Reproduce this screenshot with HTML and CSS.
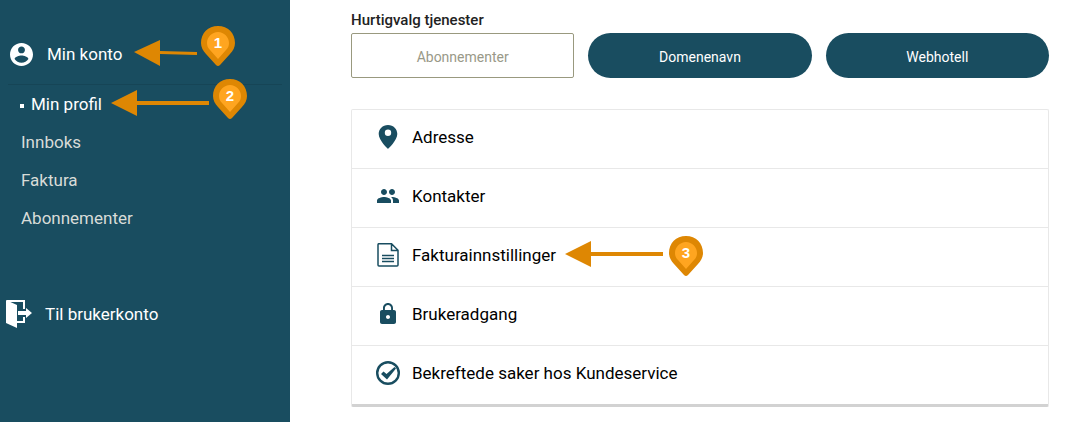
FILE: index.html
```html
<!DOCTYPE html>
<html lang="no">

<head>
    <meta charset="UTF-8">
    <meta name="viewport" content="width=device-width, initial-scale=1.0">
    <title>Min profil</title>
    <link rel="stylesheet" href="styles.css">
</head>

<body>
    <nav class="sidebar">
        <a href="#" class="side-head">
            <svg class="icon-user" viewBox="2 2 20 20"><path d="M12 2C6.48 2 2 6.48 2 12s4.48 10 10 10 10-4.48 10-10S17.52 2 12 2zm0 3c1.66 0 3 1.34 3 3s-1.34 3-3 3-3-1.34-3-3 1.34-3 3-3zm0 14.2c-2.5 0-4.71-1.28-6-3.22.03-1.99 4-3.08 6-3.08 1.99 0 5.97 1.09 6 3.08-1.29 1.94-3.5 3.22-6 3.22z"/></svg>
            <span>Min konto</span>
            <span class="pointer pointer-one">
                <svg class="arrow" width="63" height="26" viewBox="0 0 63 26"><path d="M0 12L26 0v26z"/><path d="M26 11l37 1v3l-37-1z"/></svg>
                <svg class="pin" viewBox="0 0 34 40"><path class="pin-out" d="M17 0C7 0 0 7 0 17c0 4 2 8 5 11l10 11q2 2 4 0l10-11c3-3 5-7 5-11C34 7 27 0 17 0z"/><path class="pin-in" d="M17 6C11 6 6 11 6 17c0 3 1 5 3 7l8 9 8-9c2-2 3-4 3-7 0-6-5-11-11-11z"/><text x="17" y="22">1</text></svg>
            </span>
        </a>

        <ul class="side-menu">
            <li>
                <a href="#" class="active">Min profil
                    <span class="pointer">
                        <svg class="arrow" width="98" height="26" viewBox="0 0 98 26"><path d="M0 13L26 0v26zM26 11h72v4H26z"/></svg>
                        <svg class="pin" viewBox="0 0 34 40"><path class="pin-out" d="M17 0C7 0 0 7 0 17c0 4 2 8 5 11l10 11q2 2 4 0l10-11c3-3 5-7 5-11C34 7 27 0 17 0z"/><path class="pin-in" d="M17 6C11 6 6 11 6 17c0 3 1 5 3 7l8 9 8-9c2-2 3-4 3-7 0-6-5-11-11-11z"/><text x="17" y="22">2</text></svg>
                    </span>
                </a>
            </li>
            <li><a href="#">Innboks</a></li>
            <li><a href="#">Faktura</a></li>
            <li><a href="#">Abonnementer</a></li>
        </ul>

        <a href="#" class="side-exit">
            <svg class="icon-exit" viewBox="0 0 26 28"><path d="M0 0l11 5v23L0 23z"/><path class="frame" d="M1 1h17v8M11 22h7v-5"/><path d="M12 11h8V8l6 5-6 5v-3h-8z"/></svg>
            <span>Til brukerkonto</span>
        </a>
    </nav>

    <main class="content">
        <h2>Hurtigvalg tjenester</h2>
        <div class="tabs">
            <button type="button" class="current">Abonnementer</button>
            <button type="button">Domenenavn</button>
            <button type="button">Webhotell</button>
        </div>

        <ul class="panel">
            <li>
                <a href="#">
                    <svg class="icon" viewBox="0 0 24 24"><path d="M12 0C6.500 0 2.700 4 2.700 9c0 6.500 9.300 15 9.300 15s9.300-8.500 9.300-15c0-5-3.800-9-9.300-9zm0 11a3.200 3.200 0 1 1 0-6.400 3.200 3.200 0 0 1 0 6.400z"/></svg>
                    <span>Adresse</span>
                </a>
            </li>
            <li>
                <a href="#">
                    <svg class="icon" viewBox="0 0 24 24"><path d="M16 11c1.660 0 2.990-1.340 2.990-3S17.660 5 16 5c-1.660 0-3 1.340-3 3s1.340 3 3 3zm-8 0c1.660 0 2.990-1.340 2.990-3S9.660 5 8 5C6.340 5 5 6.340 5 8s1.340 3 3 3zm0 2c-2.330 0-7 1.170-7 3.500V19h14v-2.500c0-2.330-4.670-3.500-7-3.500zm8 0c-.290 0-.620.020-.970.050 1.160.840 1.970 1.970 1.970 3.450V19h6v-2.500c0-2.330-4.670-3.500-7-3.500z"/></svg>
                    <span>Kontakter</span>
                </a>
            </li>
            <li>
                <a href="#">
                    <svg class="icon line" viewBox="0 0 24 24"><path d="M3 .7h12.500l6.500 6.500V22q0 1-1 1H3q-1 0-1-1V1.700q0-1 1-1zM15.500 1v6.500H22M6 12.500h12M6 15.500h12M6 18.500h12"/></svg>
                    <span>Fakturainnstillinger</span>
                    <span class="pointer">
                        <svg class="arrow" width="98" height="26" viewBox="0 0 98 26"><path d="M0 13L26 0v26zM26 11h72v4H26z"/></svg>
                        <svg class="pin" viewBox="0 0 34 40"><path class="pin-out" d="M17 0C7 0 0 7 0 17c0 4 2 8 5 11l10 11q2 2 4 0l10-11c3-3 5-7 5-11C34 7 27 0 17 0z"/><path class="pin-in" d="M17 6C11 6 6 11 6 17c0 3 1 5 3 7l8 9 8-9c2-2 3-4 3-7 0-6-5-11-11-11z"/><text x="17" y="22">3</text></svg>
                    </span>
                </a>
            </li>
            <li>
                <a href="#">
                    <svg class="icon" viewBox="0 0 24 24"><path d="M18 8h-1V6c0-2.760-2.240-5-5-5S7 3.240 7 6v2H6c-1.100 0-2 .9-2 2v10c0 1.100.9 2 2 2h12c1.100 0 2-.9 2-2V10c0-1.100-.9-2-2-2zm-6 9c-1.100 0-2-.9-2-2s.9-2 2-2 2 .9 2 2-.9 2-2 2zm3.100-9H8.900V6c0-1.710 1.390-3.100 3.100-3.100 1.710 0 3.100 1.390 3.100 3.100v2z"/></svg>
                    <span>Brukeradgang</span>
                </a>
            </li>
            <li>
                <a href="#">
                    <svg class="icon" viewBox="0 0 24 24"><circle class="ring" cx="12" cy="12" r="10.800"/><path d="M5 13l2.500-2.500 3 2.500L18.500 6l1.500 1.500L11 18.500z"/></svg>
                    <span>Bekreftede saker hos Kundeservice</span>
                </a>
            </li>
        </ul>
    </main>
</body>

</html>
```
FILE: styles.css
```css
* {
    margin: 0;
    padding: 0;
    box-sizing: border-box;
}

body {
    display: flex;
    min-height: 100vh;
    font-family: Roboto, "Liberation Sans", sans-serif;
    font-size: 17px;
    background: #fff;
}

a {
    color: inherit;
    text-decoration: none;
}

ul {
    list-style: none;
}

/* sidebar */
.sidebar {
    flex: 0 0 290px;
    padding: 24px 8px 0;
    background: #194d60;
    color: #fff;
}

.side-head {
    position: relative;
    display: flex;
    align-items: center;
    gap: 14px;
    height: 60px;
    padding-left: 2px;
}

.icon-user {
    width: 23px;
    height: 23px;
    fill: #fff;
}

.side-menu {
    border-top: 1px solid #164556;
}

.side-menu a {
    position: relative;
    display: flex;
    align-items: center;
    height: 38px;
    padding-left: 13px;
    color: #d8dcd8;
}

.side-menu a.active {
    color: #fff;
}

.side-menu a.active::before {
    content: "";
    width: 4px;
    height: 4px;
    margin: 4px 7px 0 -1px;
    background: #fff;
}

.side-exit {
    display: flex;
    align-items: center;
    gap: 13px;
    height: 40px;
    margin: 57px 0 0 -2px;
}

.icon-exit {
    width: 26px;
    height: 28px;
    fill: #fff;
}

.icon-exit .frame {
    fill: none;
    stroke: #fff;
    stroke-width: 2;
}

/* content */
.content {
    flex: 1;
    padding: 10px 16px 16px 61px;
}

h2 {
    font-size: 15px;
    font-weight: 500;
    line-height: 20px;
    color: #222;
}

.tabs {
    display: grid;
    grid-template-columns: repeat(3, 1fr);
    gap: 14px;
    margin-top: 3px;
}

.tabs button {
    height: 45px;
    padding-top: 3px;
    border: 0;
    border-radius: 23px;
    background: #194d60;
    color: #fff;
    font-family: inherit;
    font-size: 14px;
    cursor: pointer;
}

.tabs button.current {
    border: 1px solid #99997f;
    border-radius: 2px;
    background: #fff;
    color: #999988;
}

.panel {
    margin-top: 31px;
    border: 1px solid #e8e8e8;
    border-bottom: 3px solid #d2d2d2;
    border-radius: 2px;
}

.panel li + li {
    border-top: 1px solid #e8e8e8;
}

.panel a {
    position: relative;
    display: flex;
    align-items: center;
    gap: 12px;
    height: 58px;
    padding: 0 24px 4px;
    color: #000;
}

.icon {
    width: 24px;
    height: 24px;
    fill: #194d60;
}

.icon.line,
.icon .ring {
    fill: none;
    stroke: #194d60;
}

.icon.line {
    stroke-width: 1.5;
}

.icon .ring {
    stroke-width: 2.4;
}

/* numbered pointers over the links */
.pointer {
    position: absolute;
    top: -1px;
    left: 103px;
    display: flex;
    align-items: center;
    gap: 4px;
    height: 38px;
}

.pointer-one {
    top: 10px;
    left: 126px;
}

.panel .pointer {
    top: 7px;
    left: 213px;
    gap: 6px;
}

.arrow {
    fill: #de8703;
}

.pin {
    width: 34px;
    height: 40px;
    margin-top: -8px;
}

.pointer-one .pin {
    margin-top: -14px;
}

.panel .pin {
    margin-top: 4px;
}

.pin-out {
    fill: #de8703;
}

.pin-in {
    fill: #ffa520;
}

.pin text {
    fill: #fff;
    font-family: "Liberation Sans", sans-serif;
    font-size: 15px;
    font-weight: 700;
    text-anchor: middle;
}
```
